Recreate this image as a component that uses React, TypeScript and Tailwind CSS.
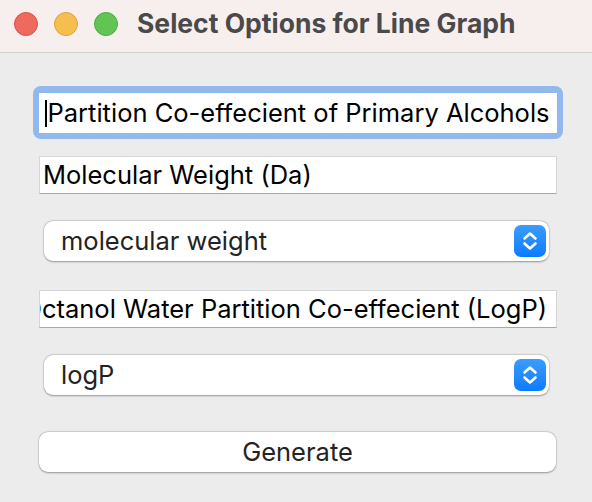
import React from "react";

function Stepper() {
  return (
    <div className="flex h-[32px] w-[32px] items-center justify-center rounded-[7px] bg-gradient-to-b from-[#3a9cff] to-[#0a7bff]">
      <svg width="32" height="32" viewBox="0 0 32 32" fill="none">
        <path d="M10.5 13.5 L16 8.5 L21.5 13.5" stroke="white" strokeWidth="2.6" strokeLinecap="round" strokeLinejoin="round" />
        <path d="M10.5 18.5 L16 23.5 L21.5 18.5" stroke="white" strokeWidth="2.6" strokeLinecap="round" strokeLinejoin="round" />
      </svg>
    </div>
  );
}

function Select({ value }: { value: string }) {
  return (
    <div className="ml-[44px] flex h-[40px] w-[505px] items-center justify-between rounded-[9px] bg-white pl-[17px] pr-[3px] shadow-[0_0.5px_2px_rgba(0,0,0,0.35),0_0_0_0.5px_rgba(0,0,0,0.08)]">
      <span className="text-[25.5px] text-[#232323]">{value}</span>
      <Stepper />
    </div>
  );
}

function Field({ children, className = "" }: { children: React.ReactNode; className?: string }) {
  return (
    <div
      className={
        "ml-[39px] flex h-[38px] w-[518px] items-center overflow-hidden whitespace-nowrap border border-[#d6d6d6] border-b-[#a8a8a8] bg-white text-[25.5px] text-black " +
        className
      }
    >
      {children}
    </div>
  );
}

export default function App() {
  return (
    <div
      className="h-[502px] w-[592px] overflow-hidden bg-[#ececec]"
      style={{ fontFamily: "Inter, 'Liberation Sans', sans-serif" }}
    >
      <div className="flex h-[53px] items-center border-b border-[#d2d0d0] bg-[#f7efee]">
        <div className="ml-[14px] flex gap-[16px] pb-[5px]">
          <span className="h-[24px] w-[24px] rounded-full border border-[#d9504a] bg-[#ee6a5f]" />
          <span className="h-[24px] w-[24px] rounded-full border border-[#dca33a] bg-[#f6be4f]" />
          <span className="h-[24px] w-[24px] rounded-full border border-[#4eaa43] bg-[#61c554]" />
        </div>
        <div className="ml-[19px] pb-[5px] text-[26.5px] font-bold text-[#4b4949]">Select Options for Line Graph</div>
      </div>

      <div className="flex flex-col">
        <div className="ml-[33px] mt-[33px] w-[530px] rounded-[8px] bg-[#93b8ee] px-[6px] pb-[6px] pt-[7px]">
          <div className="flex h-[40px] items-center overflow-hidden whitespace-nowrap bg-white text-[25.5px] text-black">
            <span className="ml-[6px] h-[27px] w-[1.5px] bg-black" />
            <span className="ml-[1px]">Partition Co-effecient of Primary Alcohols</span>
          </div>
        </div>

        <Field className="mt-[17px] pl-[3px]">Molecular Weight (Da)</Field>

        <div className="mt-[27px]">
          <Select value="molecular weight" />
        </div>

        <Field className="mt-[29px] justify-end pr-[9px]">Octanol Water Partition Co-effecient (LogP)</Field>

        <div className="mt-[27px]">
          <Select value="logP" />
        </div>

        <button className="ml-[39px] mt-[37px] flex h-[40px] w-[517px] items-center justify-center rounded-[9px] bg-white text-[25.5px] text-[#232323] shadow-[0_0.5px_2px_rgba(0,0,0,0.35),0_0_0_0.5px_rgba(0,0,0,0.08)]">
          Generate
        </button>
      </div>
    </div>
  );
}
